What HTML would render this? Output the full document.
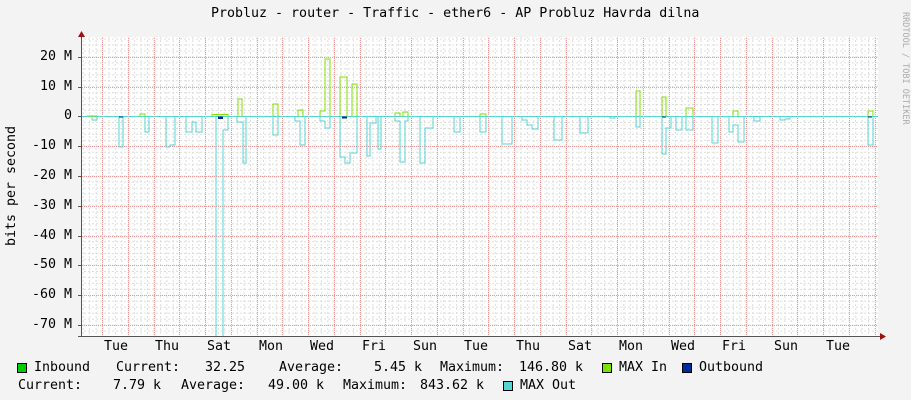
<!DOCTYPE html>
<html><head><meta charset="utf-8"><style>
html,body{margin:0;padding:0}
body{width:911px;height:400px;background:#f3f3f3;position:relative;overflow:hidden;font-family:"DejaVu Sans Mono","Liberation Mono",monospace;font-size:13.3px;color:#000}
.t{position:absolute;white-space:pre;line-height:14px}
.sq{position:absolute;width:8px;height:8px;border:1px solid #000}
</style></head><body>
<svg width="911" height="400" style="position:absolute;left:0;top:0">
<defs>
<pattern id="vm" x="102" y="0" width="6.4375" height="4" patternUnits="userSpaceOnUse">
<rect x="0" y="0" width="1" height="2" fill="#ddd"/></pattern>
<pattern id="hm" x="0" y="116" width="4" height="5.96" patternUnits="userSpaceOnUse">
<rect x="0" y="0" width="2" height="1" fill="#ddd"/></pattern>
<pattern id="vr" x="0" y="0" width="1" height="2" patternUnits="userSpaceOnUse">
<rect width="1" height="1" fill="#f29a9a"/></pattern>
<pattern id="hr" x="0" y="0" width="2" height="1" patternUnits="userSpaceOnUse">
<rect width="1" height="1" fill="#f29a9a"/></pattern>
<clipPath id="pc"><rect x="81" y="37" width="797" height="299"/></clipPath>
</defs>
<rect x="81" y="37" width="797" height="299" fill="#fff"/>
<rect x="82" y="37" width="796" height="299" fill="url(#vm)"/>
<rect x="82" y="37" width="796" height="299" fill="url(#hm)"/>
<g fill="url(#hr)">
<rect x="82" width="796" height="1" y="57"/><rect x="82" width="796" height="1" y="87"/>
<rect x="82" width="796" height="1" y="146"/><rect x="82" width="796" height="1" y="176"/>
<rect x="82" width="796" height="1" y="206"/><rect x="82" width="796" height="1" y="236"/>
<rect x="82" width="796" height="1" y="265"/><rect x="82" width="796" height="1" y="295"/>
<rect x="82" width="796" height="1" y="325"/>
</g>
<g fill="url(#vr)">
<rect y="37" height="299" width="1" x="102"/><rect y="37" height="299" width="1" x="128"/>
<rect y="37" height="299" width="1" x="154"/><rect y="37" height="299" width="1" x="179"/>
<rect y="37" height="299" width="1" x="205"/><rect y="37" height="299" width="1" x="231"/>
<rect y="37" height="299" width="1" x="257"/><rect y="37" height="299" width="1" x="282"/>
<rect y="37" height="299" width="1" x="308"/><rect y="37" height="299" width="1" x="334"/>
<rect y="37" height="299" width="1" x="360"/><rect y="37" height="299" width="1" x="385"/>
<rect y="37" height="299" width="1" x="411"/><rect y="37" height="299" width="1" x="437"/>
<rect y="37" height="299" width="1" x="463"/><rect y="37" height="299" width="1" x="488"/>
<rect y="37" height="299" width="1" x="514"/><rect y="37" height="299" width="1" x="540"/>
<rect y="37" height="299" width="1" x="566"/><rect y="37" height="299" width="1" x="591"/>
<rect y="37" height="299" width="1" x="617"/><rect y="37" height="299" width="1" x="643"/>
<rect y="37" height="299" width="1" x="669"/><rect y="37" height="299" width="1" x="694"/>
<rect y="37" height="299" width="1" x="720"/><rect y="37" height="299" width="1" x="746"/>
<rect y="37" height="299" width="1" x="772"/><rect y="37" height="299" width="1" x="797"/>
<rect y="37" height="299" width="1" x="823"/><rect y="37" height="299" width="1" x="849"/>
<rect y="37" height="299" width="1" x="875"/>
</g>
<g clip-path="url(#pc)">
<path fill="none" stroke="#55d6d3" stroke-width="1" d="
M92 116.5V120H97V116.5 M119 116.5V147H123V116.5 M145 116.5V132H149V116.5
M166 116.5V147H170V145H175V116.5 M186 116.5V132H192V122H196V132H202V116.5
M216 116.5V400H223V130H228V116.5 M237 116.5V122H243V163H246V116.5
M273 116.5V135H278V116.5 M295 116.5V121H300V145H305V116.5
M320 116.5V121H325V128H330V116.5 M340 116.5V157H345V163H350V153H357V116.5
M367 116.5V156H370V123H376V116.5 M378 116.5V149H381V116.5
M395 116.5V121H400V162H405V121H408V116.5 M420 116.5V163H425V128H433V116.5
M454 116.5V132H460V116.5 M480 116.5V132H486V116.5 M502 116.5V144H512V116.5
M522 116.5V120H527V125H532V129H538V116.5 M554 116.5V140H562V116.5
M580 116.5V133H588V116.5 M610 116.5V118H615V116.5 M636 116.5V127H640V116.5
M662 116.5V154H666V128H671V116.5 M676 116.5V130H682V116.5 M686 116.5V130H693V116.5
M712 116.5V143H718V116.5 M729 116.5V132H733V125H738V142H744V116.5
M754 116.5V121H760V116.5 M780 116.5V120H785V119H790V116.5 M868 116.5V145H873V116.5"/>
</g>
<line x1="81" x2="878" y1="116.5" y2="116.5" stroke="#55d6d3"/>
<path fill="none" stroke="#7fe000" stroke-width="1" d="
M88 116.5V116H97 M140 116.5V114H145V116.5 M212 116.5V114.5H228V116.5
M238 116.5V99H242V116.5 M273 116.5V104H278V116.5 M298 116.5V110H303V116.5
M320 116.5V111H325V82V59H330V116.5 M340 116.5V77H347V116.5 M352 116.5V84H357V116.5
M395 116.5V113H400V116.5 M403 116.5V112H408V116.5 M480 116.5V114H486V116.5
M636 116.5V91H640V116.5 M662 116.5V97H666V116.5 M686 116.5V108H693V116.5
M733 116.5V111H738V116.5 M868 116.5V111H873V116.5"/>
<g fill="#002a97"><rect x="218" y="116.5" width="5" height="2.5"/><rect x="342" y="116.5" width="5" height="2"/>
<rect x="119" y="116.5" width="4" height="1"/><rect x="662" y="116.5" width="4" height="1"/><rect x="868" y="116.5" width="4" height="1"/></g>
<line x1="81.5" y1="33" x2="81.5" y2="337" stroke="#555"/>
<line x1="78" y1="336.5" x2="882" y2="336.5" stroke="#555"/>
<path d="M78 37L81.5 31L85 37Z" fill="#a01010"/>
<path d="M880 333L886 336.5L880 340Z" fill="#a01010"/>
<g stroke="#555"><line x1="78" x2="81" y1="57.5" y2="57.5"/><line x1="78" x2="81" y1="87.5" y2="87.5"/><line x1="78" x2="81" y1="116.5" y2="116.5"/><line x1="78" x2="81" y1="146.5" y2="146.5"/><line x1="78" x2="81" y1="176.5" y2="176.5"/><line x1="78" x2="81" y1="206.5" y2="206.5"/><line x1="78" x2="81" y1="236.5" y2="236.5"/><line x1="78" x2="81" y1="265.5" y2="265.5"/><line x1="78" x2="81" y1="295.5" y2="295.5"/><line x1="78" x2="81" y1="325.5" y2="325.5"/></g>
<text x="903" y="12" transform="rotate(90 903 12)" font-family="DejaVu Sans Mono,monospace" font-size="8.5" fill="#aaa">RRDTOOL / TOBI OETIKER</text>
<text x="15" y="186" transform="rotate(-90 15 186)" text-anchor="middle" font-family="DejaVu Sans Mono,monospace" font-size="13.3">bits per second</text>
</svg>
<div class="t" style="left:211px;top:7px">Probluz - router - Traffic - ether6 - AP Probluz Havrda dilna</div>
<div class="t" style="right:839px;top:50px">20 M</div>
<div class="t" style="right:839px;top:80px">10 M</div>
<div class="t" style="right:839px;top:109px">0</div>
<div class="t" style="right:839px;top:139px">-10 M</div>
<div class="t" style="right:839px;top:169px">-20 M</div>
<div class="t" style="right:839px;top:199px">-30 M</div>
<div class="t" style="right:839px;top:229px">-40 M</div>
<div class="t" style="right:839px;top:258px">-50 M</div>
<div class="t" style="right:839px;top:288px">-60 M</div>
<div class="t" style="right:839px;top:318px">-70 M</div>
<div class="t" style="left:104px;top:340px">Tue</div>
<div class="t" style="left:155px;top:340px">Thu</div>
<div class="t" style="left:207px;top:340px">Sat</div>
<div class="t" style="left:259px;top:340px">Mon</div>
<div class="t" style="left:310px;top:340px">Wed</div>
<div class="t" style="left:362px;top:340px">Fri</div>
<div class="t" style="left:413px;top:340px">Sun</div>
<div class="t" style="left:464px;top:340px">Tue</div>
<div class="t" style="left:516px;top:340px">Thu</div>
<div class="t" style="left:568px;top:340px">Sat</div>
<div class="t" style="left:619px;top:340px">Mon</div>
<div class="t" style="left:671px;top:340px">Wed</div>
<div class="t" style="left:722px;top:340px">Fri</div>
<div class="t" style="left:774px;top:340px">Sun</div>
<div class="t" style="left:826px;top:340px">Tue</div>
<div class="sq" style="left:17px;top:363px;background:#00cc00"></div>
<div class="t" style="left:34px;top:361px">Inbound</div>
<div class="t" style="left:116px;top:361px">Current:</div>
<div class="t" style="left:205px;top:361px">32.25</div>
<div class="t" style="left:279px;top:361px">Average:</div>
<div class="t" style="left:374px;top:361px">5.45 k</div>
<div class="t" style="left:440px;top:361px">Maximum:</div>
<div class="t" style="left:519px;top:361px">146.80 k</div>
<div class="sq" style="left:602px;top:363px;background:#7fe000"></div>
<div class="t" style="left:619px;top:361px">MAX In</div>
<div class="sq" style="left:682px;top:363px;background:#002a97"></div>
<div class="t" style="left:699px;top:361px">Outbound</div>
<div class="t" style="left:18px;top:379px">Current:</div>
<div class="t" style="left:113px;top:379px">7.79 k</div>
<div class="t" style="left:181px;top:379px">Average:</div>
<div class="t" style="left:268px;top:379px">49.00 k</div>
<div class="t" style="left:343px;top:379px">Maximum:</div>
<div class="t" style="left:420px;top:379px">843.62 k</div>
<div class="sq" style="left:503px;top:381px;background:#55d6d3"></div>
<div class="t" style="left:520px;top:379px">MAX Out</div>
</body></html>
